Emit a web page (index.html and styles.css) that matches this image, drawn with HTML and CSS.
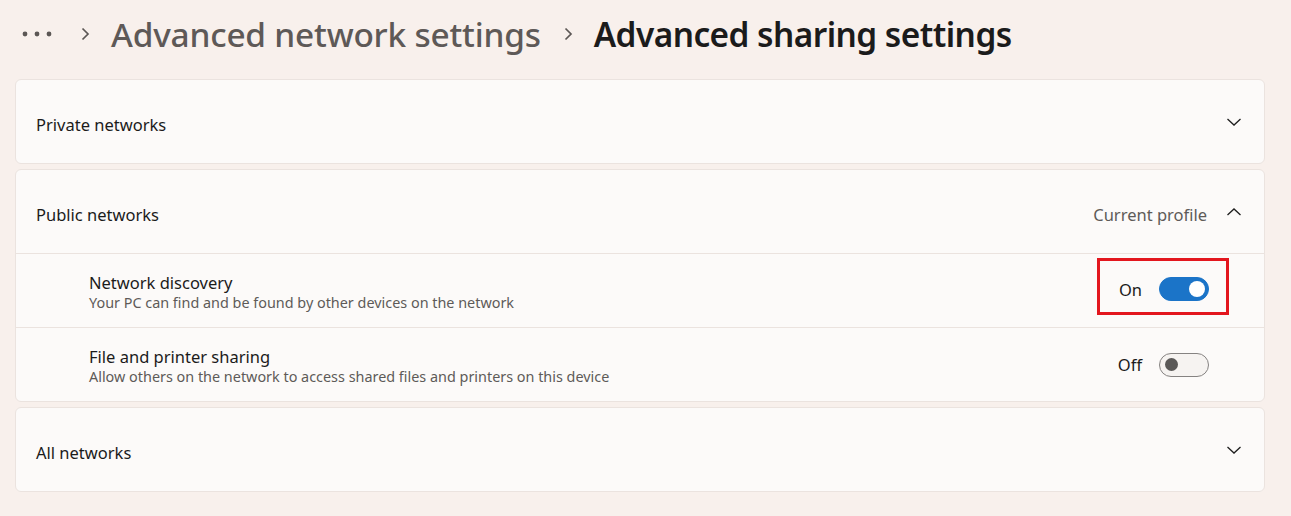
FILE: index.html
```html
<!DOCTYPE html>
<html lang="en">
<head>
  <meta charset="UTF-8" />
  <title>Advanced sharing settings</title>
  <link rel="stylesheet" href="styles.css">
</head>
<body>
<div class="crumbs">
  <svg class="dots" width="30" height="8" viewBox="0 0 30 8"><circle cx="3" cy="4" r="2.4" fill="#5c5755"/><circle cx="15" cy="4" r="2.4" fill="#5c5755"/><circle cx="27" cy="4" r="2.4" fill="#5c5755"/></svg>
  <svg class="sep" width="10" height="14" viewBox="0 0 10 14"><path d="M2.5 1.5 L8 7 L2.5 12.5" fill="none" stroke="#5c5755" stroke-width="1.7"/></svg>
  <span class="crumb">Advanced network settings</span>
  <svg class="sep" width="10" height="14" viewBox="0 0 10 14"><path d="M2.5 1.5 L8 7 L2.5 12.5" fill="none" stroke="#5c5755" stroke-width="1.7"/></svg>
  <span class="crumb current">Advanced sharing settings</span>
</div>

<div class="list">
  <div class="card">
    <div class="head">
      <span class="label">Private networks</span>
      <svg class="chev" width="16" height="10" viewBox="0 0 16 10"><path d="M1.5 2 L8 8 L14.5 2" fill="none" stroke="#1f1f1f" stroke-width="1.3"/></svg>
    </div>
  </div>

  <div class="card">
    <div class="head">
      <span class="label">Public networks</span>
      <span class="hint">Current profile</span>
      <svg class="chev" width="16" height="10" viewBox="0 0 16 10"><path d="M1.5 8 L8 2 L14.5 8" fill="none" stroke="#1f1f1f" stroke-width="1.3"/></svg>
    </div>
    <div class="row">
      <div class="text">
        <div class="title">Network discovery</div>
        <div class="desc">Your PC can find and be found by other devices on the network</div>
      </div>
      <div class="ctl marked">
        <span class="state">On</span>
        <span class="toggle on"><span class="knob"></span></span>
      </div>
    </div>
    <div class="row">
      <div class="text">
        <div class="title">File and printer sharing</div>
        <div class="desc">Allow others on the network to access shared files and printers on this device</div>
      </div>
      <div class="ctl">
        <span class="state">Off</span>
        <span class="toggle"><span class="knob"></span></span>
      </div>
    </div>
  </div>

  <div class="card">
    <div class="head">
      <span class="label">All networks</span>
      <svg class="chev" width="16" height="10" viewBox="0 0 16 10"><path d="M1.5 2 L8 8 L14.5 2" fill="none" stroke="#1f1f1f" stroke-width="1.3"/></svg>
    </div>
  </div>
</div>
</body>
</html>
```

FILE: styles.css
```css
body {
  margin: 0;
  background: #f8f0ec;
  font-family: 'Noto Sans', 'Open Sans', sans-serif;
  color: #1b1b1b;
}

.crumbs {
  display: flex;
  align-items: center;
  height: 68px;
  padding-left: 22px;
}
.dots {
  display: block;
  margin-right: 28px;
}
.sep {
  display: block;
  margin-right: 21px;
}
.crumb {
  font-size: 33.4px;
  font-weight: 500;
  color: #5e5957;
  margin-right: 22px;
  letter-spacing: -0.2px;
}
.crumb.current {
  color: #1b1b1b;
  font-weight: 600;
  letter-spacing: -0.55px;
}

.list {
  display: flex;
  flex-direction: column;
  gap: 5px;
  margin: 11px 26px 0 15px;
}
.card {
  background: #fcfaf9;
  border: 1px solid #ebe3df;
  border-radius: 6px;
}
.head {
  display: flex;
  align-items: center;
  height: 83px;
  padding: 0 22px 0 20px;
  font-size: 16.5px;
}
.label {
  flex: 1;
  padding-top: 5px;
}
.hint {
  color: #5e5a58;
  margin-right: 19px;
  padding-top: 5px;
}
.chev {
  display: block;
}

.row {
  display: flex;
  align-items: center;
  height: 73px;
  border-top: 1px solid #ebe3df;
  padding: 0 55px 0 73px;
}
.text {
  flex: 1;
  padding-top: 2px;
}
.title {
  font-size: 16.5px;
  line-height: 21px;
}
.desc {
  font-size: 14.4px;
  color: #5e5a58;
  line-height: 19px;
}

.ctl {
  display: flex;
  align-items: center;
  gap: 17px;
  font-size: 16.5px;
}
.ctl.marked {
  outline: 3px solid #e3161e;
  padding: 16px 17px 11px 19px;
  margin: 0 -17px 8px 0;
}
.toggle {
  display: flex;
  align-items: center;
  width: 48px;
  height: 22px;
  border: 1px solid #858281;
  border-radius: 13px;
  background: #f6f3f1;
}
.toggle .knob {
  width: 13px;
  height: 13px;
  border-radius: 50%;
  background: #5b5958;
  margin-left: 5px;
}
.toggle.on {
  background: #1b74c8;
  border-color: #1b74c8;
  justify-content: flex-end;
}
.toggle.on .knob {
  background: #ffffff;
  width: 16px;
  height: 16px;
  margin: 0 3px 0 0;
}
```
